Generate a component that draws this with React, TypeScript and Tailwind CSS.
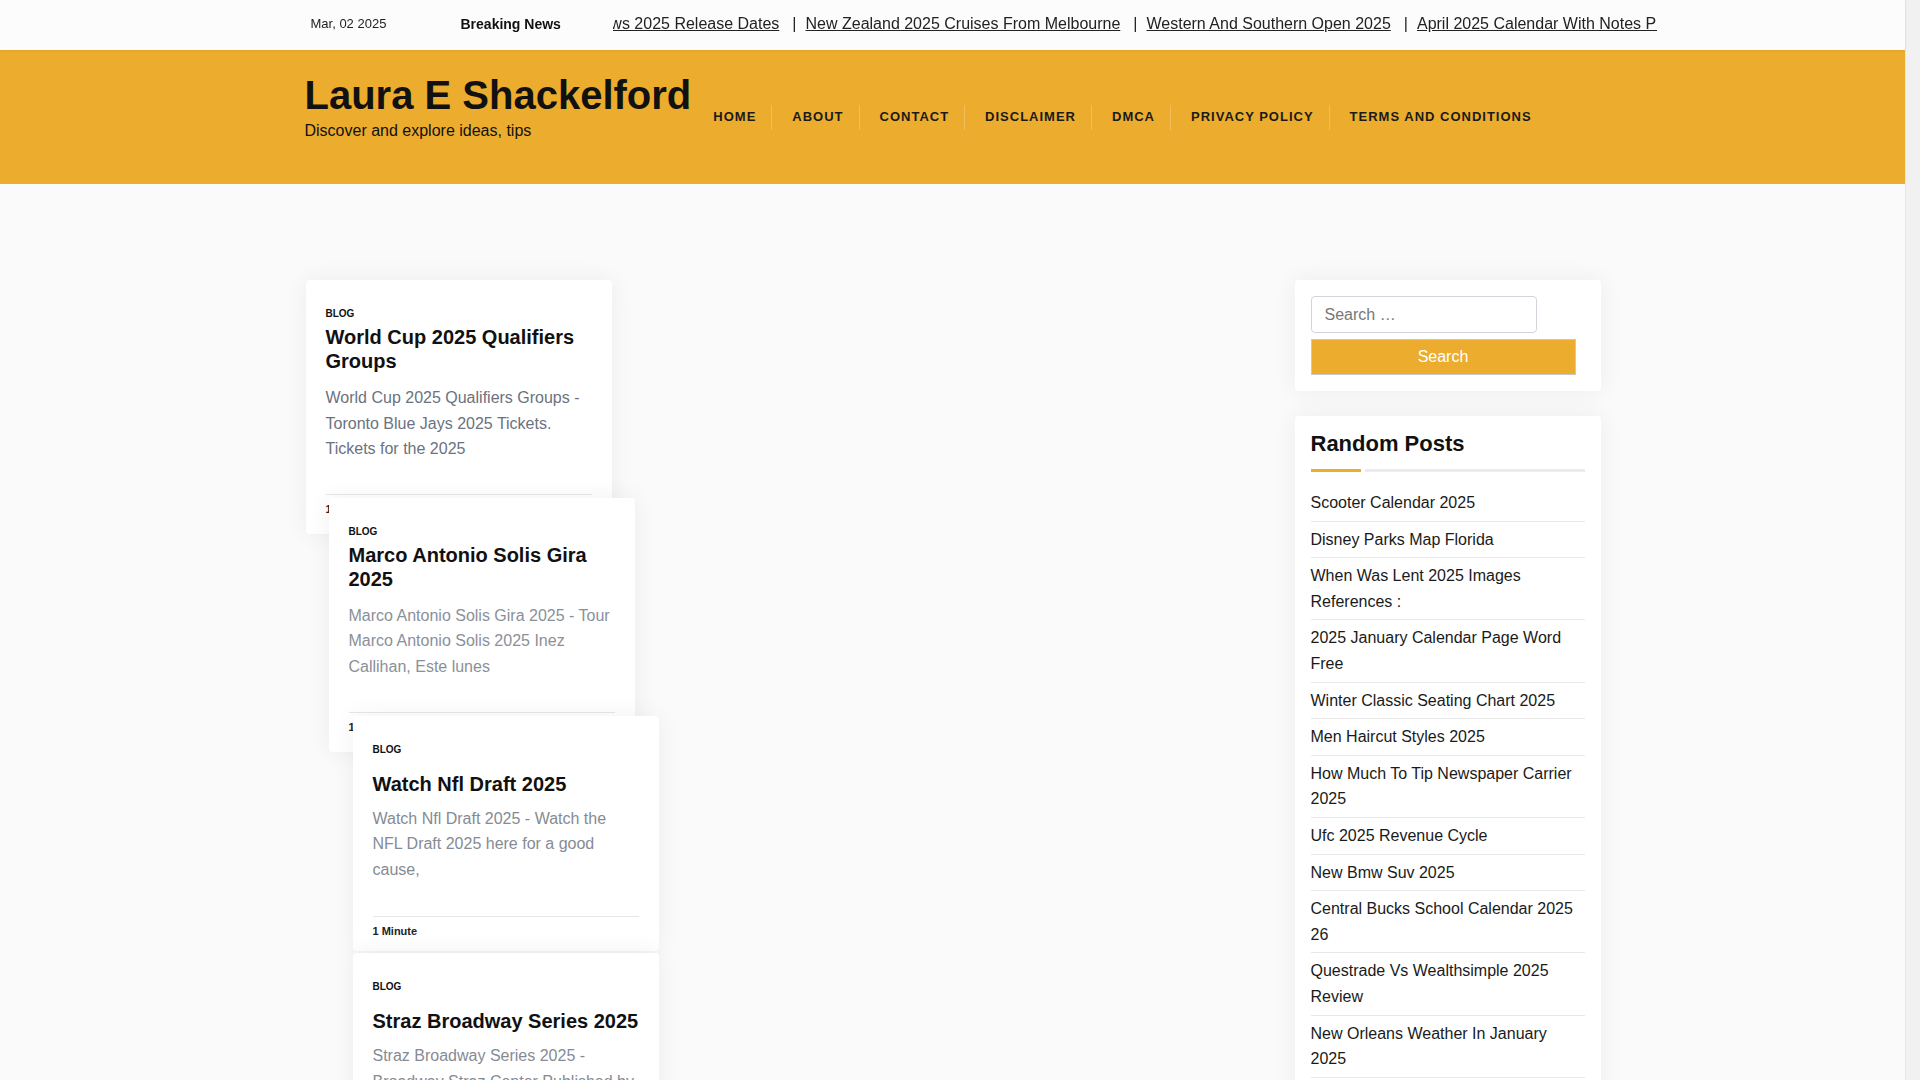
import React from 'react'

const tickerItems = [
  'New Tv Shows 2025 Release Dates',
  'New Zealand 2025 Cruises From Melbourne',
  'Western And Southern Open 2025',
  'April 2025 Calendar With Notes Printable',
  'Disney Parks Map Florida',
]

const navItems = ['Home', 'About', 'Contact', 'Disclaimer', 'DMCA', 'Privacy Policy', 'Terms and Conditions']

type Post = {
  title: string
  excerpt: string
  offset: string
  single: boolean
  tone: string
}

const posts: Post[] = [
  {
    title: 'World Cup 2025 Qualifiers Groups',
    excerpt: 'World Cup 2025 Qualifiers Groups - Toronto Blue Jays 2025 Tickets. Tickets for the 2025',
    offset: 'ml-[1px]',
    single: false,
    tone: 'text-[#6b7280]',
  },
  {
    title: 'Marco Antonio Solis Gira 2025',
    excerpt: 'Marco Antonio Solis Gira 2025 - Tour Marco Antonio Solis 2025 Inez Callihan, Este lunes',
    offset: 'ml-[24px] -mt-[36px]',
    single: false,
    tone: 'text-[#8a9099]',
  },
  {
    title: 'Watch Nfl Draft 2025',
    excerpt: 'Watch Nfl Draft 2025 - Watch the NFL Draft 2025 here for a good cause,',
    offset: 'ml-[48px] -mt-[36px]',
    single: true,
    tone: 'text-[#858b94]',
  },
  {
    title: 'Straz Broadway Series 2025',
    excerpt: 'Straz Broadway Series 2025 - Broadway Straz Center Published by the Straz Center,',
    offset: 'ml-[48px] mt-[2px]',
    single: true,
    tone: 'text-[#858b94]',
  },
]

const randomPosts = [
  'Scooter Calendar 2025',
  'Disney Parks Map Florida',
  'When Was Lent 2025 Images References :',
  '2025 January Calendar Page Word Free',
  'Winter Classic Seating Chart 2025',
  'Men Haircut Styles 2025',
  'How Much To Tip Newspaper Carrier 2025',
  'Ufc 2025 Revenue Cycle',
  'New Bmw Suv 2025',
  'Central Bucks School Calendar 2025 26',
  'Questrade Vs Wealthsimple 2025 Review',
  'New Orleans Weather In January 2025',
  'Nfl Pro Bowl 2025 Voting',
  'Fiscal Year 2025 Calendar',
]

function PostCard({ post }: { post: Post }) {
  return (
    <article
      className={`relative w-[306px] bg-white rounded-[4px] shadow-[0_0_25px_rgba(0,0,0,0.06)] px-[20px] pt-[26px] ${post.single ? 'pb-[12px]' : 'pb-[17px]'} ${post.offset}`}
    >
      <div className="text-[10px] leading-[15px] font-bold uppercase text-[#111]">Blog</div>
      <h2
        className={`text-[20px] leading-[24px] font-bold text-[#111] ${post.single ? 'mt-[15px] whitespace-nowrap' : 'mt-[4px]'}`}
      >
        {post.title}
      </h2>
      <p className={`text-[16px] leading-[25.6px] ${post.tone} ${post.single ? 'mt-[10px]' : 'mt-[12px]'}`}>
        {post.excerpt}
      </p>
      <div
        className={`border-t border-[#e5e7eb] pt-[6px] text-[11px] leading-[16px] font-bold text-[#222] ${post.single ? 'mt-[34px]' : 'mt-[32px]'}`}
      >
        1 Minute
      </div>
    </article>
  )
}

export default function App() {
  return (
    <div className="min-h-screen bg-[#fafafa] pr-[15px] font-['Liberation_Sans',Arial,sans-serif] text-[#111]">
      {/* top bar */}
      <div className="bg-[#fcfcfc] h-[50px] shadow-[0_1px_3px_rgba(0,0,0,0.05)] relative z-10">
        <div className="max-w-[1296px] mx-auto h-full flex items-center pl-[6px] pb-[2px]">
          <div className="w-[150px] shrink-0 text-[13px] text-[#222]">Mar, 02 2025</div>
          <div className="w-[152px] shrink-0 text-[14px] font-bold text-[#111]">Breaking News</div>
          <div className="w-[1044px] shrink-0 overflow-hidden">
            <div className="flex items-center whitespace-nowrap -ml-[89px] text-[16px] text-[#222]">
              {tickerItems.map((t, i) => (
                <React.Fragment key={t}>
                  {i > 0 && <span className="ml-[13px] mr-[9px]">|</span>}
                  <a href="#" className="underline">
                    {t}
                  </a>
                </React.Fragment>
              ))}
            </div>
          </div>
        </div>
      </div>

      {/* header */}
      <header className="bg-[#ecac2d]">
        <div className="max-w-[1296px] mx-auto h-[134px] flex items-center">
          <div className="pb-[21px] shrink-0">
            <h1 className="text-[40px] leading-[48px] font-bold text-[#111]">Laura E Shackelford</h1>
            <p className="text-[16px] leading-[24px] text-[#111]">Discover and explore ideas, tips</p>
          </div>
          <nav className="ml-[2px]">
            <ul className="flex items-center">
              {navItems.map((n, i) => (
                <li
                  key={n}
                  className={`h-[25px] flex items-center pl-[20px] pr-[15px] ${i > 0 ? 'border-l border-[rgba(255,255,255,0.22)]' : ''}`}
                >
                  <a href="#" className="text-[13px] font-bold uppercase tracking-[1px] text-[#1a1a1a]">
                    {n}
                  </a>
                </li>
              ))}
            </ul>
          </nav>
        </div>
      </header>

      {/* content */}
      <main className="max-w-[1296px] mx-auto pt-[96px] pb-[60px] flex justify-between items-start">
        <div className="flex flex-col items-start">
          {posts.map(p => (
            <PostCard key={p.title} post={p} />
          ))}
        </div>

        <aside className="w-[306px] shrink-0 flex flex-col gap-[25px]">
          <div className="bg-white rounded-[4px] shadow-[0_0_25px_rgba(0,0,0,0.06)] p-[16px]">
            <input
              type="search"
              placeholder="Search …"
              className="block w-[226px] h-[37px] border border-[#d1d5db] rounded-[4px] px-[13px] text-[16px] text-[#222] placeholder:text-[#777] outline-none"
            />
            <button className="block mt-[6px] w-[265px] h-[36px] bg-[#ecac2d] border border-[#c9c9c9] text-white text-[16px]">
              Search
            </button>
          </div>

          <div className="bg-white rounded-[4px] shadow-[0_0_25px_rgba(0,0,0,0.06)] px-[16px] pt-[15px] pb-[10px]">
            <h3 className="text-[22px] leading-[26px] font-bold text-[#111]">Random Posts</h3>
            <div className="mt-[12px] flex gap-[4px] h-[3px]">
              <div className="w-[50px] bg-[#ecac2d]" />
              <div className="flex-1 bg-[#ebebeb]" />
            </div>
            <ul className="mt-[13px]">
              {randomPosts.map(r => (
                <li key={r} className="py-[5px] border-b border-[#e8e8e8]">
                  <a href="#" className="text-[16px] leading-[25.6px] text-[#1a1a1a]">
                    {r}
                  </a>
                </li>
              ))}
            </ul>
          </div>
        </aside>
      </main>

      {/* page scrollbar track */}
      <div className="fixed top-0 right-0 w-[15px] h-screen bg-[#f1f1f1] border-l border-[#e6e6e6]" />
    </div>
  )
}
